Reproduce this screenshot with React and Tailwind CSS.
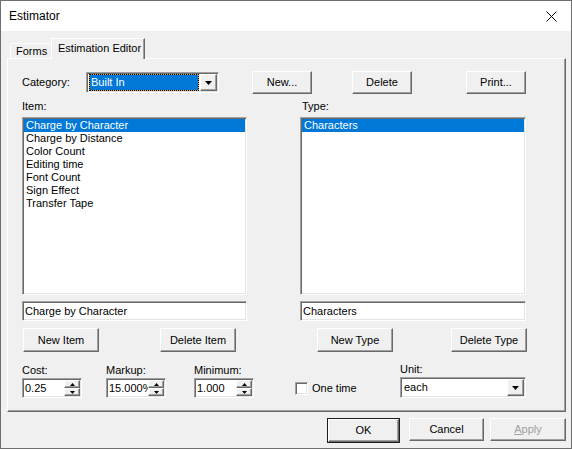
import React from "react";

const FONT = "font-['Liberation_Sans',Arial,sans-serif]";

// classic 3D edges
const RAISED =
  "border border-t-white border-l-white border-r-[#696969] border-b-[#696969] shadow-[inset_-1px_-1px_0_#a0a0a0] bg-[#f0f0f0]";
const SUNKEN =
  "border border-t-[#a0a0a0] border-l-[#a0a0a0] border-r-white border-b-white shadow-[inset_1px_1px_0_#696969,inset_-1px_-1px_0_#e3e3e3]";

const ITEMS = [
  "Charge by Character",
  "Charge by Distance",
  "Color Count",
  "Editing time",
  "Font Count",
  "Sign Effect",
  "Transfer Tape",
];

const Btn = ({ children, className = "" }) => (
  <div className={`${RAISED} h-[23px] flex items-center justify-center text-[11px] shrink-0 ${className}`}>
    {children}
  </div>
);

const DownArrow = ({ w = 7, h = 4 }) => (
  <svg width={w} height={h} viewBox={`0 0 ${w} ${h}`}>
    <polygon points={`0,0 ${w},0 ${w / 2},${h}`} fill="#000" />
  </svg>
);

const UpArrow = ({ w = 5, h = 3 }) => (
  <svg width={w} height={h} viewBox={`0 0 ${w} ${h}`}>
    <polygon points={`0,${h} ${w},${h} ${w / 2},0`} fill="#000" />
  </svg>
);

const ListBox = ({ rows, className = "" }) => (
  <div className={`${SUNKEN} bg-white p-[1px] h-[178px] ${className}`}>
    {rows.map((r, i) => (
      <div
        key={r}
        className={`h-[13px] leading-[13px] pl-[2px] text-[11px] ${i === 0 ? "bg-[#0078d7] text-white" : "text-black"}`}
      >
        {r}
      </div>
    ))}
  </div>
);

const TextBox = ({ value, className = "" }) => (
  <div className={`${SUNKEN} bg-white h-[20px] p-[1px] flex items-center pl-[2px] text-[11px] ${className}`}>
    {value}
  </div>
);

const Spin = ({ value }) => (
  <div className={`${SUNKEN} bg-white w-[60px] h-[20px] p-[1px] flex`}>
    <div className="w-[40px] overflow-hidden whitespace-nowrap pl-[1px] text-[11px] leading-[16px]">{value}</div>
    <div className="w-[16px] flex flex-col">
      <div className={`${RAISED} h-[8px] flex items-center justify-center`}>
        <UpArrow />
      </div>
      <div className={`${RAISED} h-[8px] flex items-center justify-center`}>
        <DownArrow w={5} h={3} />
      </div>
    </div>
  </div>
);

const ComboBtn = () => (
  <div className={`${RAISED} w-[17px] h-[17px] flex items-center justify-center shrink-0`}>
    <DownArrow />
  </div>
);

export default function App() {
  return (
    <div className={`${FONT} w-[572px] h-[449px] border border-[#6f6f6f] bg-[#f0f0f0] flex flex-col text-black`}>
      {/* title bar */}
      <div className="h-[30px] bg-white flex items-center justify-between pl-[8px] pr-[14px] shrink-0">
        <span className="text-[12px]">Estimator</span>
        <svg width="11" height="11" viewBox="0 0 11 11">
          <path d="M0.5 0.5 L10.5 10.5 M10.5 0.5 L0.5 10.5" stroke="#000" strokeWidth="1" />
        </svg>
      </div>

      {/* tabs */}
      <div className="flex items-end pl-[9px] mt-[7px] text-[11px]">
        <div className="h-[15px] w-[41px] border-t border-l border-white rounded-tl-[2px] pl-[5px] leading-[15px]">
          Forms
        </div>
        <div className="relative z-10 h-[21px] w-[94px] -mb-px bg-[#f0f0f0] border-t border-l border-white border-r border-r-[#696969] shadow-[inset_-1px_0_0_#a0a0a0] rounded-tl-[2px] pl-[6px] leading-[19px]">
          Estimation Editor
        </div>
      </div>

      {/* panel */}
      <div className="ml-[6px] w-[559px] h-[354px] border border-t-white border-l-white border-r-[#696969] border-b-[#696969] shadow-[inset_-1px_-1px_0_#a0a0a0] pl-[14px] pt-[12px] text-[11px]">
        {/* category row */}
        <div className="flex items-center h-[23px]">
          <div className="w-[64px]">Category:</div>
          <div className={`${SUNKEN} bg-white w-[133px] h-[21px] p-[1px] flex items-center gap-[1px]`}>
            <div className="flex-1 h-[17px] bg-[#e8a33d] ml-[1px]">
              <div className="h-full border border-dotted border-black bg-[#0078d7] bg-clip-padding text-white leading-[15px] pl-[1px]">
                Built In
              </div>
            </div>
            <ComboBtn />
          </div>
          <Btn className="w-[60px] ml-[33px]">New...</Btn>
          <Btn className="w-[60px] ml-[40px]">Delete</Btn>
          <Btn className="w-[60px] ml-[54px]">Print...</Btn>
        </div>

        {/* lists */}
        <div className="flex mt-[6px]">
          <div className="w-[225px] flex flex-col">
            <div className="h-[13px] leading-[13px]">Item:</div>
            <ListBox rows={ITEMS} className="mt-[4px]" />
            <TextBox value="Charge by Character" className="mt-[6px]" />
            <div className="flex mt-[7px]">
              <Btn className="w-[76px] h-[24px] ml-[1px]">New Item</Btn>
              <Btn className="w-[76px] h-[24px] ml-[61px]">Delete Item</Btn>
            </div>
          </div>
          <div className="w-[226px] ml-[53px] flex flex-col">
            <div className="h-[13px] leading-[13px] pl-[2px]">Type:</div>
            <ListBox rows={["Characters"]} className="mt-[4px]" />
            <TextBox value="Characters" className="mt-[6px]" />
            <div className="flex mt-[7px]">
              <Btn className="w-[76px] h-[24px] ml-[17px]">New Type</Btn>
              <Btn className="w-[76px] h-[24px] ml-[58px]">Delete Type</Btn>
            </div>
          </div>
        </div>

        {/* values row */}
        <div className="flex items-end mt-[11px]">
          <div className="flex flex-col">
            <div className="h-[13px] leading-[13px] mb-[1px]">Cost:</div>
            <Spin value="0.25" />
          </div>
          <div className="flex flex-col ml-[24px]">
            <div className="h-[13px] leading-[13px] mb-[1px]">Markup:</div>
            <Spin value="15.000%" />
          </div>
          <div className="flex flex-col ml-[28px]">
            <div className="h-[13px] leading-[13px] mb-[1px]">Minimum:</div>
            <Spin value="1.000" />
          </div>
          <div className="flex items-center h-[20px] ml-[41px] w-[105px]">
            <div className={`${SUNKEN} bg-white w-[13px] h-[13px]`} />
            <span className="ml-[4px]">One time</span>
          </div>
          <div className="flex flex-col">
            <div className="h-[13px] leading-[13px] mb-[1px]">Unit:</div>
            <div className={`${SUNKEN} bg-white w-[126px] h-[21px] p-[1px] flex items-center`}>
              <div className="flex-1 pl-[2px]">each</div>
              <ComboBtn />
            </div>
          </div>
        </div>
      </div>

      {/* dialog buttons */}
      <div className="flex justify-end pr-[5px] mt-[6px] text-[11px]">
        <div className="border border-[#1e1e1e] shrink-0">
          <Btn className="w-[71px] h-[21px]">OK</Btn>
        </div>
        <Btn className="w-[75px] ml-[9px]">Cancel</Btn>
        <Btn className="w-[76px] ml-[6px] text-[#a0a0a0]">
          <span>
            <span className="underline">A</span>pply
          </span>
        </Btn>
      </div>
    </div>
  );
}
